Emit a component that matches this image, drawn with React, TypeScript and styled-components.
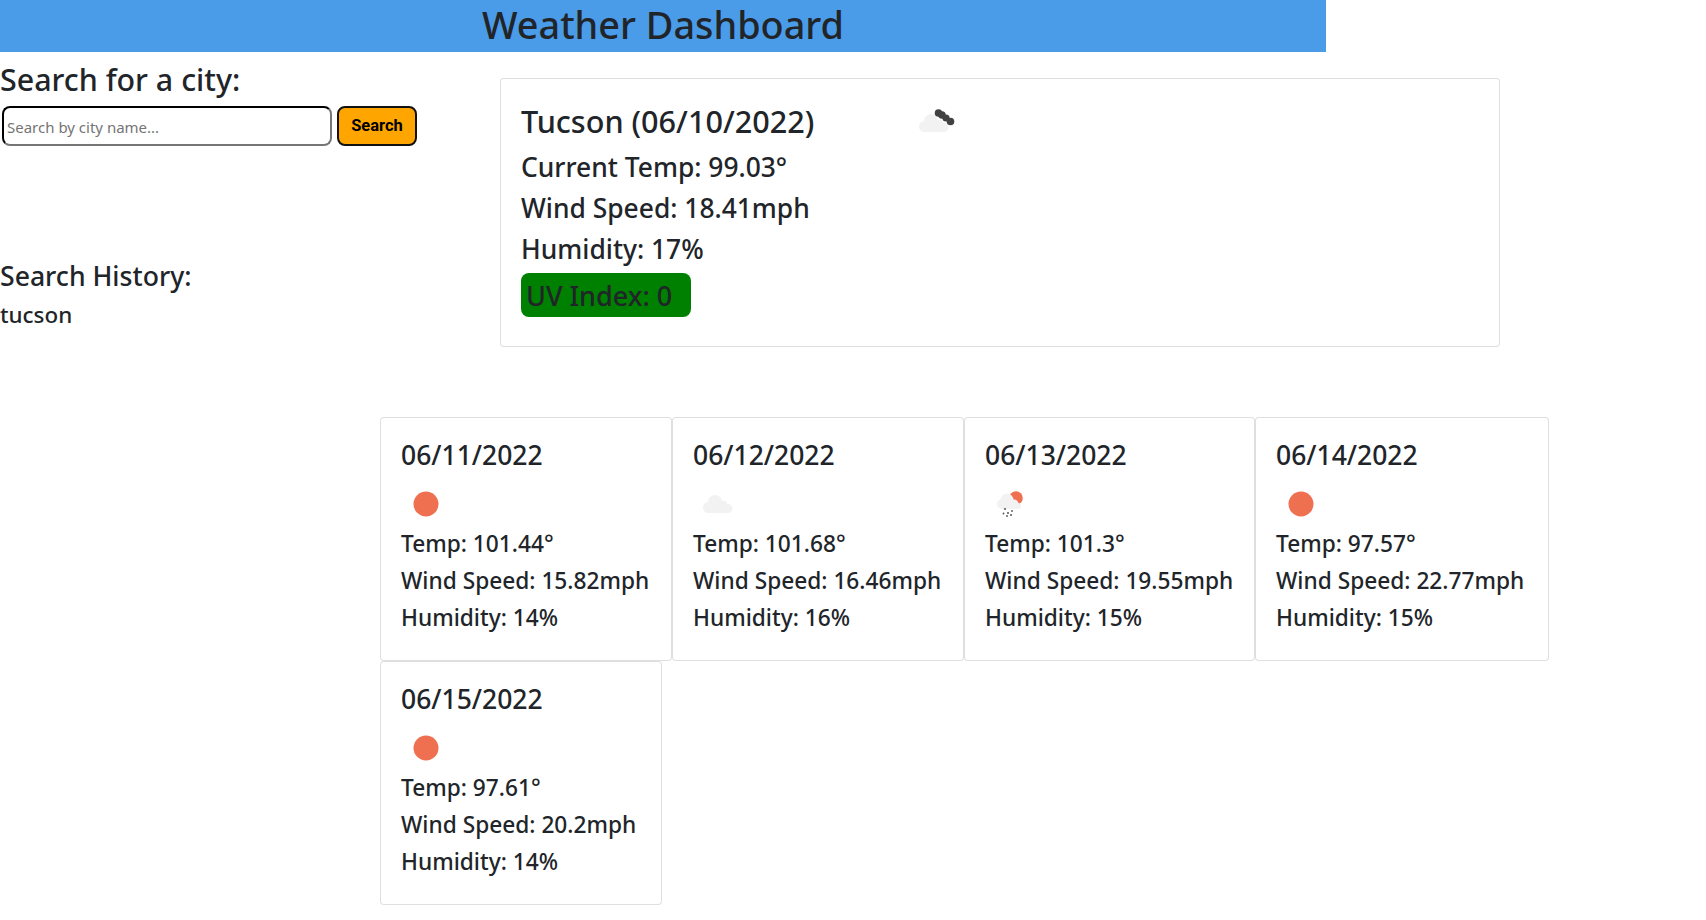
import styled, { createGlobalStyle } from "styled-components";

const GlobalStyle = createGlobalStyle`
  * {
    box-sizing: border-box;
  }
  body {
    margin: 0;
    background: #fff;
    color: #212529;
    font-family: "Noto Sans", sans-serif;
  }
`;

const Header = styled.header`
  width: 1326px;
  height: 52px;
  background-color: #4b9ce8;
  display: flex;
  justify-content: center;
  align-items: center;
`;

const HeaderTitle = styled.h1`
  margin: 0;
  font-size: 37.8px;
  font-weight: 500;
  line-height: 50px;
  padding-bottom: 2px;
`;

const TopRow = styled.div`
  display: flex;
  align-items: flex-start;
`;

const Sidebar = styled.aside`
  width: 500px;
  padding-top: 10px;
`;

const SearchTitle = styled.h3`
  margin: 0;
  font-size: 30.4px;
  font-weight: 500;
  line-height: 36px;
`;

const SearchForm = styled.form`
  display: flex;
  gap: 5px;
  margin: 8px 0 0 2px;
`;

const SearchInput = styled.input`
  width: 330px;
  height: 40px;
  padding: 2px 3px 0;
  border: 2px inset #767676;
  border-top-color: #1a1a1a;
  border-left-color: #1a1a1a;
  border-radius: 8px;
  font-family: "Noto Sans", sans-serif;
  font-size: 15px;
  &::placeholder {
    color: #757575;
  }
`;

const SearchButton = styled.button`
  width: 80px;
  height: 40px;
  padding: 0 0 2px;
  background-color: #ffa500;
  border: 2px solid #111;
  border-radius: 8px;
  color: #000;
  font-family: Roboto, sans-serif;
  font-size: 16.5px;
  font-weight: 700;
`;

const HistoryTitle = styled.h4`
  margin: 112px 0 0;
  font-size: 26.6px;
  font-weight: 500;
  line-height: 36px;
`;

const HistoryItem = styled.div`
  margin-top: 5px;
  font-size: 22.4px;
  font-weight: 500;
  line-height: 32px;
`;

const Card = styled.section<{ $width: number }>`
  width: ${(props) => props.$width}px;
  padding: 20px;
  border: 1px solid rgba(0, 0, 0, 0.125);
  border-radius: 4px;
  background: #fff;
`;

const CurrentCard = styled(Card)`
  height: 269px;
  margin-top: 26px;
`;

const CityRow = styled.div`
  display: flex;
  align-items: center;
  height: 44px;
`;

const CityName = styled.h2`
  margin: 0;
  width: 388px;
  font-size: 30.6px;
  font-weight: 500;
  line-height: 40px;
`;

const CityIcon = styled.div`
  margin-top: 4px;
`;

const CurrentLine = styled.div`
  margin-top: 8px;
  font-size: 26.4px;
  font-weight: 500;
  line-height: 33px;
`;

const UvBadge = styled.div`
  width: 170px;
  height: 44px;
  margin-top: 7px;
  padding-left: 5px;
  border-radius: 8px;
  background-color: #008000;
  font-size: 27px;
  font-weight: 500;
  line-height: 46px;
`;

const Forecast = styled.div`
  display: flex;
  flex-wrap: wrap;
  width: 1180px;
  margin: 70px 0 0 380px;
`;

const DayCard = styled(Card)`
  height: 244px;
`;

const DayDate = styled.h4`
  margin: 0;
  font-size: 26.5px;
  font-weight: 500;
  line-height: 34px;
`;

const DayIcon = styled.div`
  margin: 7px 0 -4px;
`;

const DayLine = styled.div`
  font-size: 22.7px;
  font-weight: 500;
  line-height: 37px;
`;

const IconBox = styled.svg`
  display: block;
  flex: none;
  width: 50px;
  height: 50px;
`;

const SUN = "#ef7050";
const CLOUD = "#f2f2f2";

const CloudShape = () => (
  <g fill={CLOUD}>
    <circle cx="15.5" cy="28.5" r="5.5" />
    <circle cx="22" cy="23" r="7" />
    <circle cx="30" cy="26" r="4.5" />
    <circle cx="35" cy="29.5" r="4.5" />
    <rect x="15" y="26" width="20" height="8" />
  </g>
);

const WeatherIcon = ({ kind }: { kind: string }) => {
  if (kind === "clear") {
    return (
      <IconBox viewBox="0 0 50 50">
        <circle cx="25" cy="25" r="12.5" fill={SUN} />
      </IconBox>
    );
  }
  if (kind === "clouds") {
    return (
      <IconBox viewBox="0 0 50 50">
        <CloudShape />
      </IconBox>
    );
  }
  if (kind === "broken") {
    return (
      <IconBox viewBox="0 0 50 50">
        <CloudShape />
        <g fill="#424242">
          <circle cx="29.5" cy="15" r="3.8" />
          <circle cx="33" cy="17" r="3.8" />
          <circle cx="37" cy="20" r="3.6" />
          <circle cx="41.5" cy="23.5" r="3.8" />
        </g>
      </IconBox>
    );
  }
  return (
    <IconBox viewBox="0 0 50 50">
      <circle cx="31" cy="19" r="6.8" fill={SUN} />
      <g fill={CLOUD}>
        <circle cx="16.5" cy="25" r="4.5" />
        <circle cx="22" cy="21" r="6.5" />
        <circle cx="29" cy="25" r="4.5" />
        <circle cx="33" cy="27" r="3" />
        <rect x="16" y="24" width="17" height="6" />
      </g>
      <g fill="#555">
        <circle cx="20" cy="30" r="1" />
        <circle cx="23" cy="34" r="1" />
        <circle cx="27" cy="32" r="0.9" />
        <circle cx="18.5" cy="34.5" r="0.9" />
        <circle cx="26" cy="36" r="1" />
        <circle cx="22" cy="37" r="0.9" />
      </g>
    </IconBox>
  );
};

const days = [
  { date: "06/11/2022", icon: "clear", temp: "101.44", wind: "15.82", humidity: 14, width: 292 },
  { date: "06/12/2022", icon: "clouds", temp: "101.68", wind: "16.46", humidity: 16, width: 292 },
  { date: "06/13/2022", icon: "rain", temp: "101.3", wind: "19.55", humidity: 15, width: 291 },
  { date: "06/14/2022", icon: "clear", temp: "97.57", wind: "22.77", humidity: 15, width: 294 },
  { date: "06/15/2022", icon: "clear", temp: "97.61", wind: "20.2", humidity: 14, width: 282 },
];

export default function App() {
  return (
    <>
      <GlobalStyle />
      <Header>
        <HeaderTitle>Weather Dashboard</HeaderTitle>
      </Header>
      <TopRow>
        <Sidebar>
          <SearchTitle>Search for a city:</SearchTitle>
          <SearchForm onSubmit={(e) => e.preventDefault()}>
            <SearchInput placeholder="Search by city name..." />
            <SearchButton>Search</SearchButton>
          </SearchForm>
          <HistoryTitle>Search History:</HistoryTitle>
          <HistoryItem>tucson</HistoryItem>
        </Sidebar>
        <CurrentCard $width={1000}>
          <CityRow>
            <CityName>Tucson (06/10/2022)</CityName>
            <CityIcon>
              <WeatherIcon kind="broken" />
            </CityIcon>
          </CityRow>
          <CurrentLine>Current Temp: 99.03°</CurrentLine>
          <CurrentLine>Wind Speed: 18.41mph</CurrentLine>
          <CurrentLine>Humidity: 17%</CurrentLine>
          <UvBadge>UV Index: 0</UvBadge>
        </CurrentCard>
      </TopRow>
      <Forecast>
        {days.map((day) => (
          <DayCard key={day.date} $width={day.width}>
            <DayDate>{day.date}</DayDate>
            <DayIcon>
              <WeatherIcon kind={day.icon} />
            </DayIcon>
            <DayLine>Temp: {day.temp}°</DayLine>
            <DayLine>Wind Speed: {day.wind}mph</DayLine>
            <DayLine>Humidity: {day.humidity}%</DayLine>
          </DayCard>
        ))}
      </Forecast>
    </>
  );
}
